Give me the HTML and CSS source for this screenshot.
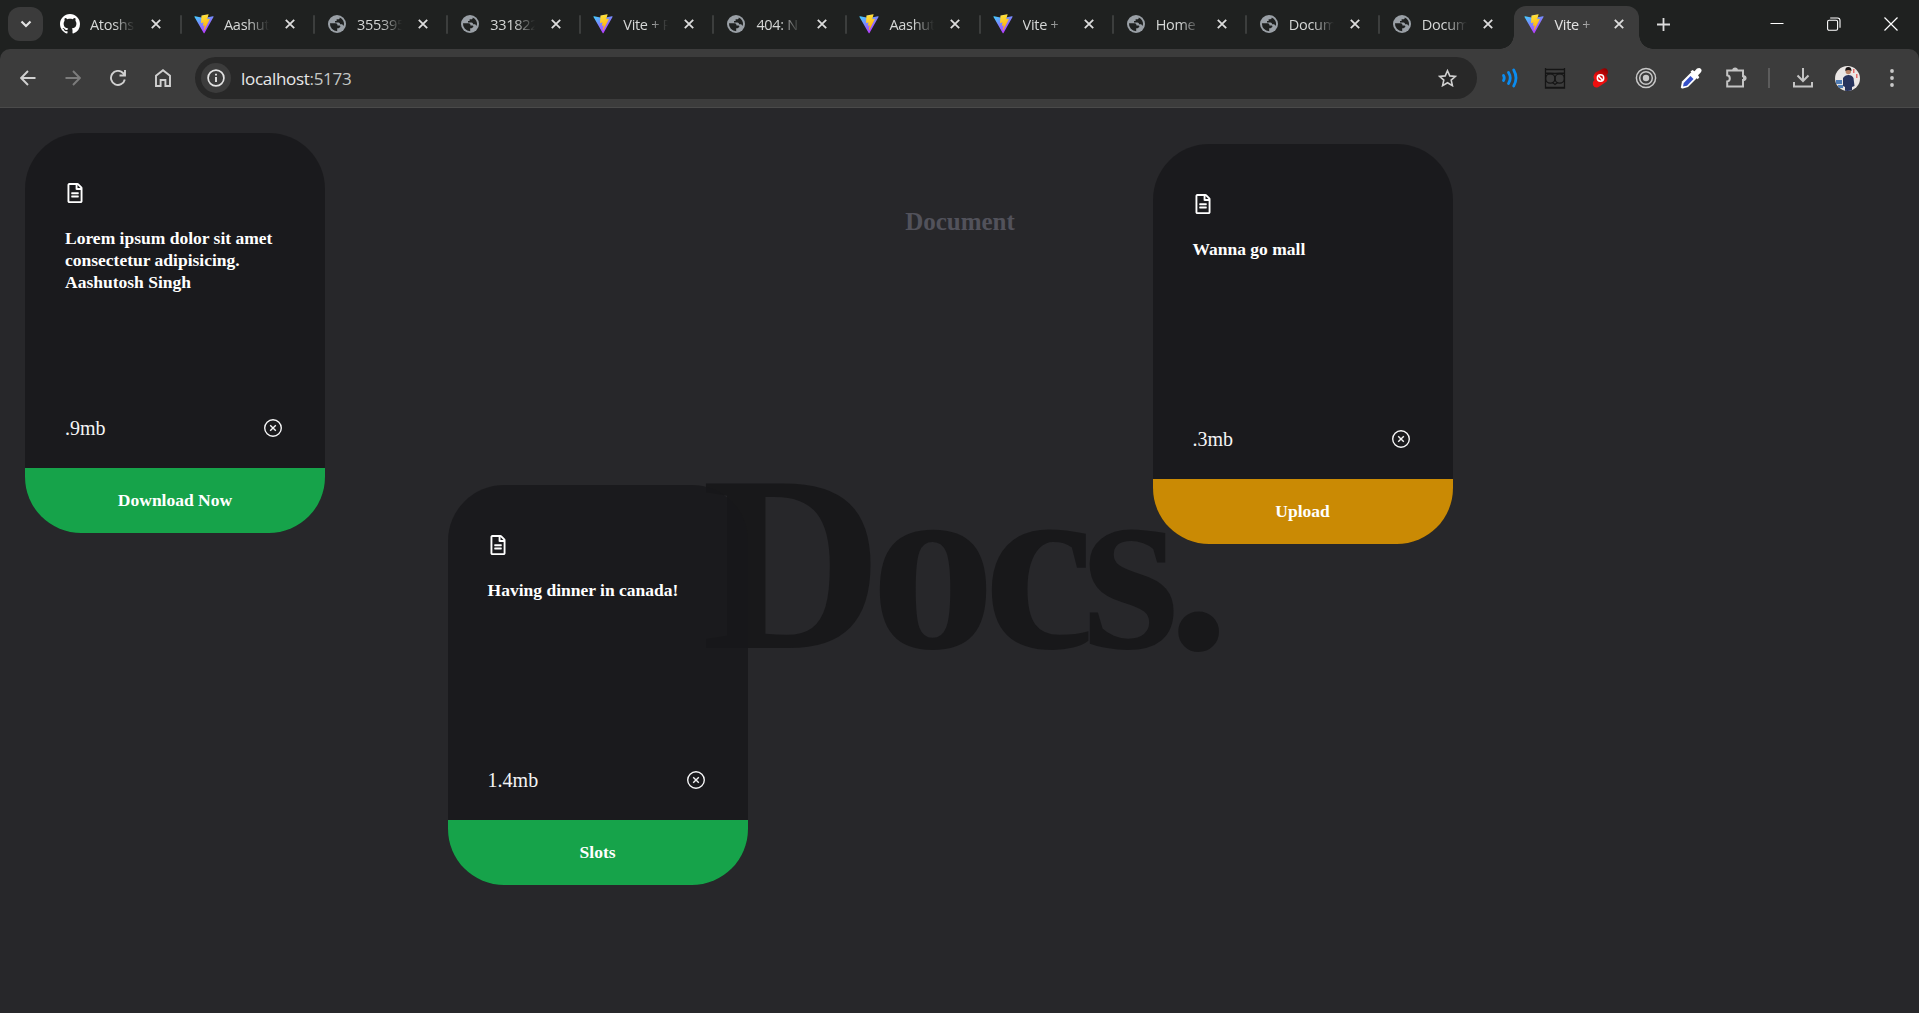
FILE: index.html
```html
<!DOCTYPE html>
<html lang="en">
<head>
<meta charset="utf-8">
<title>Vite + React</title>
<link rel="stylesheet" href="styles.css">
</head>
<body>
<svg class="defs" aria-hidden="true">
  <defs>
    <linearGradient id="va" x1="0" y1="0" x2="0.6" y2="1"><stop offset="0" stop-color="#41d1ff"/><stop offset="1" stop-color="#bd34fe"/></linearGradient>
    <linearGradient id="vb" x1="0.4" y1="0" x2="0.6" y2="1"><stop offset="0" stop-color="#ffea83"/><stop offset="0.1" stop-color="#ffdd35"/><stop offset="1" stop-color="#ffa800"/></linearGradient>
    <linearGradient id="red" x1="0.8" y1="0" x2="0.3" y2="1"><stop offset="0" stop-color="#8c0000"/><stop offset="0.6" stop-color="#ee0f0f"/></linearGradient>
    <clipPath id="face"><circle cx="12.5" cy="12.5" r="12.5"/></clipPath>
  </defs>
  <symbol id="vite" viewBox="0 0 410 404">
    <path fill="url(#va)" d="M399.6 59.5 215.6 388.5c-3.8 6.8-13.5 6.9-17.4.1L10.6 59.6c-4.3-7.5 2.1-16.6 10.6-15l184.2 32.9c1.2.2 2.4.2 3.5 0l180.3-32.8c8.4-1.6 14.9 7.4 10.4 14.8z"/>
    <path fill="url(#vb)" d="M293 1.600 156.900 28.200c-2.200.4-3.900 2.300-4 4.600l-8.400 141.400c-.2 3.300 2.900 5.900 6.100 5.200l37.900-8.700c3.500-.8 6.700 2.300 6 5.900l-11.300 55.100c-.8 3.700 2.700 6.900 6.300 5.800l23.400-7.100c3.600-1.100 7.100 2.100 6.300 5.800l-17.900 86.600c-1.100 5.400 6.100 8.400 9.100 3.700l2-3.100 110.900-221.300c1.900-3.700-1.300-7.900-5.400-7.100l-39 7.500c-3.700.7-6.800-2.700-5.700-6.300L298.700 8c1-3.600-2.100-7.100-5.700-6.400z"/>
  </symbol>
  <symbol id="globe" viewBox="0 0 18 18">
    <circle cx="9" cy="9" r="9" fill="#9aa0a6"/>
    <path fill="#1f2120" d="M2 8.300h5.500c1.700 0 2 1.200 2 2.200h2c.9 0 1.200 1.200.5 1.700l-1.400 1h-1.400v3A7.200 7.200 0 0 1 2 8.300zM11.700 2.400c.3 1-.5 1.900-1.500 1.900H8.600v1.800H7v1.500h3.400c1.200 0 1.600.8 1.600 1.700h1.300c.9 0 1.600.5 1.800 1.300l.8 0A7.200 7.200 0 0 0 11.700 2.400z"/>
  </symbol>
  <symbol id="x" viewBox="0 0 10 10"><path d="M.8.800 9.200 9.200M9.200.8.800 9.200" fill="none" stroke="currentColor" stroke-width="1.800"/></symbol>
  <symbol id="file" viewBox="0 0 384 512"><path fill="currentColor" d="M288 248v28c0 6.600-5.400 12-12 12H108c-6.600 0-12-5.400-12-12v-28c0-6.600 5.400-12 12-12h168c6.600 0 12 5.400 12 12zm-12 72H108c-6.600 0-12 5.400-12 12v28c0 6.600 5.400 12 12 12h168c6.600 0 12-5.400 12-12v-28c0-6.600-5.400-12-12-12zm108-188.100V464c0 26.500-21.500 48-48 48H48c-26.500 0-48-21.500-48-48V48C0 21.500 21.500 0 48 0h204.100C264.800 0 277 5.100 286 14.100L369.900 98c9 8.900 14.100 21.200 14.100 33.900zm-128-80V128h76.100L256 51.900zM336 464V176H232c-13.300 0-24-10.700-24-24V48H48v416h288z"/></symbol>
  <symbol id="closeo" viewBox="0 0 20 20"><circle cx="10" cy="10" r="8.300" fill="none" stroke="currentColor" stroke-width="1.400"/><path d="m7.200 7.200 5.600 5.600m0-5.600-5.600 5.600" stroke="currentColor" stroke-width="1.400"/></symbol>
</svg>

<header class="strip">
  <button class="search"><svg width="12" height="8" viewBox="0 0 12 8"><path d="M1.500 1.500 6 6l4.500-4.500" fill="none" stroke="#e3e3e3" stroke-width="2.200"/></svg></button>
  <nav class="tabs">
    <div class="tab"><svg class="fav" viewBox="0 0 16 16"><path fill="#fff" d="M8 0C3.580 0 0 3.580 0 8c0 3.540 2.290 6.530 5.470 7.590.4.070.55-.17.55-.38 0-.19-.01-.82-.01-1.490-2.010.37-2.530-.49-2.690-.94-.09-.23-.48-.94-.82-1.130-.28-.15-.68-.52-.01-.53.63-.01 1.080.58 1.230.82.72 1.210 1.870.87 2.330.66.07-.52.28-.87.51-1.070-1.780-.2-3.640-.89-3.640-3.950 0-.87.31-1.590.82-2.150-.08-.2-.36-1.020.08-2.120 0 0 .67-.21 2.200.82.640-.18 1.320-.27 2-.27s1.360.09 2 .27c1.530-1.040 2.200-.82 2.200-.82.44 1.100.16 1.920.08 2.120.51.560.82 1.270.82 2.150 0 3.070-1.870 3.750-3.650 3.950.29.25.54.73.54 1.480 0 1.070-.01 1.930-.01 2.200 0 .21.15.46.55.38A8.010 8.010 0 0 0 16 8c0-4.420-3.580-8-8-8z"/></svg><span class="name">Atoshs</span><svg class="x"><use href="#x"/></svg></div>
    <div class="tab"><svg class="fav"><use href="#vite"/></svg><span class="name">Aashut</span><svg class="x"><use href="#x"/></svg></div>
    <div class="tab"><svg class="fav g"><use href="#globe"/></svg><span class="name">355395</span><svg class="x"><use href="#x"/></svg></div>
    <div class="tab"><svg class="fav g"><use href="#globe"/></svg><span class="name">331822</span><svg class="x"><use href="#x"/></svg></div>
    <div class="tab"><svg class="fav"><use href="#vite"/></svg><span class="name">Vite + R</span><svg class="x"><use href="#x"/></svg></div>
    <div class="tab"><svg class="fav g"><use href="#globe"/></svg><span class="name">404: N</span><svg class="x"><use href="#x"/></svg></div>
    <div class="tab"><svg class="fav"><use href="#vite"/></svg><span class="name">Aashut</span><svg class="x"><use href="#x"/></svg></div>
    <div class="tab"><svg class="fav"><use href="#vite"/></svg><span class="name">Vite +</span><svg class="x"><use href="#x"/></svg></div>
    <div class="tab"><svg class="fav g"><use href="#globe"/></svg><span class="name">Home</span><svg class="x"><use href="#x"/></svg></div>
    <div class="tab"><svg class="fav g"><use href="#globe"/></svg><span class="name">Docum</span><svg class="x"><use href="#x"/></svg></div>
    <div class="tab"><svg class="fav g"><use href="#globe"/></svg><span class="name">Docum</span><svg class="x"><use href="#x"/></svg></div>
    <div class="tab active"><svg class="fav"><use href="#vite"/></svg><span class="name">Vite +</span><svg class="x"><use href="#x"/></svg></div>
  </nav>
  <svg class="plus" width="13" height="13" viewBox="0 0 13 13"><path d="M6.500 0v13M0 6.500h13" stroke="#dcdcdc" stroke-width="1.800"/></svg>
  <div class="win">
    <svg width="14" height="14" viewBox="0 0 14 14"><path d="M.5 6.500h13" stroke="#fff"/></svg>
    <svg width="14" height="14" viewBox="0 0 14 14" fill="none" stroke="#fff" stroke-width="1.100"><rect x=".6" y="3.200" width="10" height="10" rx="1.500"/><path d="M3.200 1h7.300Q13 1 13 3.500v7.300"/></svg>
    <svg width="14" height="14" viewBox="0 0 14 14"><path d="m.5.500 13 13m0-13-13 13" stroke="#fff" stroke-width="1.200"/></svg>
  </div>
</header>

<div class="toolbar">
  <div class="navs">
    <svg width="16" height="16" viewBox="0 0 16 16" fill="none" stroke="#d0d0d0" stroke-width="1.900"><path d="M15.500 8H1.500M8 1 1.200 8 8 15"/></svg>
    <svg width="16" height="16" viewBox="0 0 16 16" fill="none" stroke="#7c7c7c" stroke-width="1.900"><path d="M.5 8h14M8 1l6.800 7L8 15"/></svg>
    <svg width="16" height="16" viewBox="0 0 16 16" fill="none" stroke="#d0d0d0" stroke-width="1.900"><path d="M14.800 9.500A7 7 0 1 1 13 3l1.500 1.700M15 0v5.500H9.500"/></svg>
    <svg width="16" height="18" viewBox="0 0 16 18" fill="none" stroke="#d0d0d0" stroke-width="1.900"><path d="M1 17V6.700L8 1.200l7 5.500V17h-4.600v-6H5.600v6z"/></svg>
  </div>
  <div class="omni">
    <span class="info"><svg width="18" height="18" viewBox="0 0 18 18"><circle cx="9" cy="9" r="7.900" fill="none" stroke="#e3e3e3" stroke-width="1.700"/><path d="M9 8v5M9 4.700v1.900" stroke="#e3e3e3" stroke-width="1.900"/></svg></span>
    <span class="url">localhost<i>:5173</i></span>
    <svg class="star" width="19" height="18" viewBox="0 0 19 18"><path d="m9.500 1.700 2.300 5.200 5.600.5-4.200 3.700 1.200 5.500-4.900-2.900-4.900 2.900 1.200-5.500L1.600 7.400l5.600-.5z" fill="none" stroke="#d0d0d0" stroke-width="1.600"/></svg>
  </div>
  <div class="exts">
    <svg width="22" height="22" viewBox="0 0 22 22" fill="none" stroke="#0a8cf0" stroke-width="2.800" stroke-linecap="round"><path d="M4.500 8.500q1.500 2.500 0 5M9.500 5.500q3.500 5.500 0 11M14.700 3q4.600 8 0 16"/></svg>
    <svg width="22" height="22" viewBox="0 0 22 22" fill="none" stroke="#151515" stroke-width="1.300"><path d="M1.500 1v20h19V1M1 2.500h20M2 6q9 1 18 0M1 20.500h20"/><circle cx="6.300" cy="11.500" r="4.700"/><circle cx="15.700" cy="11.500" r="4.700"/><path d="m8.500 15.500 2.500 2 2.500-2"/></svg>
    <svg width="22" height="22" viewBox="0 0 22 22"><path fill="url(#red)" d="M6.500 5.500 14 1.600q3.500-1.200 4.800 1.800 1 3.200-1.500 4.900 2.600 2.800.4 6.200L9.500 19.900q-3.800 1.600-5.400-1.700-1-3.200 1.500-5.100-2.500-3.600.9-7.600z"/><circle cx="11.500" cy="11" r="3.200" fill="none" stroke="#fff" stroke-width="1.500"/><path d="m9.400 8.900 4.200 4.200" stroke="#fff" stroke-width="1.500"/></svg>
    <svg width="22" height="22" viewBox="0 0 22 22" fill="none" stroke="#c8c8c8" stroke-width="1.500"><circle cx="11" cy="11" r="9.600"/><circle cx="11" cy="11" r="6.300"/><circle cx="11" cy="11" r="3.200" fill="#c8c8c8" stroke="none"/></svg>
    <svg width="22" height="22" viewBox="0 0 22 22"><path d="M11.500 5 2 14.600.8 20.500q.8 1.200 2 .9L8 20l9.500-9.400z" fill="#fff"/><path d="m10.500 9 3 3-6.500 6.800-4 .7.700-3.500z" fill="#3550c8"/><path d="m10.500 4.500 2-1.500 2 1.300L17 1.600q2.500-1.600 4 .4 1.400 1.800-.5 3.800L18 8.300l1.300 2-1.500 1.900z" fill="#fff"/></svg>
    <svg width="22" height="22" viewBox="0 0 22 22" fill="none" stroke="#c4c4c4" stroke-width="2"><path d="M2.200 3.500H18v5.800h.8a1.300 1.300 0 0 1 0 3.600H18v6.600H2.200v-5q2.600-.3 2.600-3T2.200 8.300z"/><path fill="#c4c4c4" stroke="none" d="M7.300 3.200a2.800 2.800 0 0 1 5.600 0zM18 8.300a2.800 2.800 0 0 1 0 5.600z"/></svg>
  </div>
  <span class="sep"></span>
  <div class="user">
    <svg width="20" height="20" viewBox="0 0 20 20" fill="none" stroke="#c4c4c4" stroke-width="2"><path d="M10 0v13M4.500 7.500 10 13l5.500-5.500M1 14v4.500h18V14"/></svg>
    <svg width="25" height="25" viewBox="0 0 25 25"><g clip-path="url(#face)"><path fill="#eae6e4" d="M0 0h25v25H0z"/><path fill="#4f7cb4" d="M1 14h6v4H1zM3 19h5v3H3z"/><path fill="#e56b6b" d="M18 3h1.500v4H18zM21 8h1.500v4H21z"/><path fill="#27335c" d="M8 12q2-3 5.500-3T18.500 12l1 8-2.500 1v4H10v-4l-2-1z"/><circle cx="13.300" cy="5.500" r="2.700" fill="#b98265"/><path fill="#1b1515" d="M10.300 5Q10 1 13.300 1t3.200 4q-3-2-6.200 0z"/></g></svg>
    <svg width="4" height="18" viewBox="0 0 4 18" fill="#c8c8c8"><circle cx="2" cy="2" r="1.900"/><circle cx="2" cy="9" r="1.900"/><circle cx="2" cy="16" r="1.900"/></svg>
  </div>
</div>

<main class="page">
  <div class="heading">Document</div>
  <h1 class="big">Docs.</h1>
  <article class="card c1">
    <svg class="ficon"><use href="#file"/></svg>
    <p class="desc">Lorem ipsum dolor sit amet consectetur adipisicing. Aashutosh Singh</p>
    <div class="meta"><span>.9mb</span><svg class="cl"><use href="#closeo"/></svg></div>
    <div class="tag green">Download Now</div>
  </article>
  <article class="card c2">
    <svg class="ficon"><use href="#file"/></svg>
    <p class="desc">Having dinner in canada!</p>
    <div class="meta"><span>1.4mb</span><svg class="cl"><use href="#closeo"/></svg></div>
    <div class="tag green">Slots</div>
  </article>
  <article class="card c3">
    <svg class="ficon"><use href="#file"/></svg>
    <p class="desc">Wanna go mall</p>
    <div class="meta"><span>.3mb</span><svg class="cl"><use href="#closeo"/></svg></div>
    <div class="tag amber">Upload</div>
  </article>
</main>
</body>
</html>
```
FILE: styles.css
```css
* { box-sizing: border-box; margin: 0; padding: 0; }
body { width: 1919px; height: 1013px; overflow: hidden; background: #27272a; color: #fff; font-family: "Liberation Serif", serif; display: flex; flex-direction: column; }
svg { display: block; flex: none; }
.defs { position: absolute; width: 0; height: 0; }

.strip { height: 49px; flex: none; background: #1f2120; display: flex; position: relative; z-index: 1; font-family: "Open Sans", sans-serif; }
.search { width: 35px; height: 34px; margin: 7px 16px 0 8px; border: 0; border-radius: 12px; background: #3b3b3b; display: flex; align-items: center; justify-content: center; }
.tabs { display: flex; }
.tab { width: 133.100px; height: 49px; display: flex; align-items: center; padding: 0 0 1px 1px; position: relative; }
.tab:first-child { width: 134px; }
.tab:not(.active)::after { content: ""; position: absolute; right: 11px; top: 15px; width: 2px; height: 19px; background: #3c3e3d; border-radius: 1px; }
.tab:nth-child(11)::after { display: none; }
.fav { width: 20px; height: 20px; }
.fav.g { width: 18px; height: 18px; margin: 0 1px; }
.name { width: 46px; margin-left: 10px; font-size: 14.500px; letter-spacing: -.3px; line-height: 24px; overflow: hidden; white-space: nowrap; color: #d5d7d6; padding-top: 1px; -webkit-mask-image: linear-gradient(90deg, #000 52%, transparent 98%); mask-image: linear-gradient(90deg, #000 52%, transparent 98%); }
.x { width: 10px; height: 10px; margin-left: 15px; color: #dcdcdc; }
.active { width: 125px; margin-left: -9.500px; padding-left: 10px; margin-right: 18px; }
.active::before { content: ""; position: absolute; left: 0; top: 6px; width: 125px; height: 43px; background: #3c3c3c; border-radius: 12px 12px 0 0; }
.active > * { position: relative; }
.active::after { content: ""; position: absolute; left: -14px; right: -14px; bottom: 0; height: 14px; background: radial-gradient(circle at 0 0, transparent 13.500px, #3c3c3c 14px) left / 14px 14px no-repeat, radial-gradient(circle at 100% 0, transparent 13.500px, #3c3c3c 14px) right / 14px 14px no-repeat; }
.active .name { color: #e3e3e3; }
.active .x { margin-left: 14px; }
.plus { margin-top: 18px; }
.win { margin: 17px 21px 0 auto; display: flex; gap: 43px; }

.toolbar { height: 59px; flex: none; background: #3c3c3c; border-bottom: 1px solid #4a4a4a; border-radius: 10px 10px 0 0; box-shadow: 0 -10px 0 0 #1f2120; display: flex; align-items: center; font-family: "Open Sans", sans-serif; }
.navs { display: flex; align-items: center; gap: 29px; padding-left: 20px; width: 195px; }
.omni { width: 1282px; height: 42px; border-radius: 21px; background: #282828; display: flex; align-items: center; padding: 0 20px 0 6px; }
.info { width: 30px; height: 30px; border-radius: 50%; background: #3c3c3c; display: flex; align-items: center; justify-content: center; }
.url { margin-left: 10px; font-size: 17px; letter-spacing: -.3px; color: #e8e8e8; }
.url i { font-style: normal; color: #c4c7c5; }
.star { margin-left: auto; }
.exts { display: flex; gap: 23.200px; margin-left: 22px; }
.sep { width: 2px; height: 20px; background: #5c5c5c; margin-left: 21px; }
.user { display: flex; align-items: center; margin-left: 23px; gap: 22px; }
.user svg:last-child { margin-left: 8px; }

.page { flex: 1; position: relative; background: #27272a; }
.heading { padding: 100px 0 0 1px; text-align: center; font-weight: 700; font-size: 25px; line-height: 28px; color: #52525b; }
.big { position: absolute; left: 50%; top: 50%; transform: translate(-50%, calc(-50% + 2px)); font-size: 251px; line-height: 1; letter-spacing: -.05em; font-weight: 700; color: #18181a; }
.card { position: absolute; width: 300px; height: 400px; border-radius: 56px; background: rgba(24, 24, 26, .8); overflow: hidden; padding: 50px 40px 0; display: flex; flex-direction: column; }
.c1 { left: 25px; top: 25px; }
.c2 { left: 447.600px; top: 377px; }
.c3 { left: 1152.500px; top: 36px; }
.ficon { width: 20px; height: 20px; }
.desc { margin-top: 25px; font-size: 17.500px; line-height: 21.900px; font-weight: 700; }
.meta { margin-top: auto; height: 30px; margin-bottom: 25px; display: flex; align-items: center; justify-content: space-between; font-size: 20px; color: #f4f4f5; }
.cl { width: 20px; height: 20px; margin-right: 2px; }
.tag { height: 65px; flex: none; margin: 0 -40px; display: flex; align-items: center; justify-content: center; font-size: 17.500px; font-weight: 700; }
.green { background: #16a34a; }
.amber { background: #ca8a04; }
```
